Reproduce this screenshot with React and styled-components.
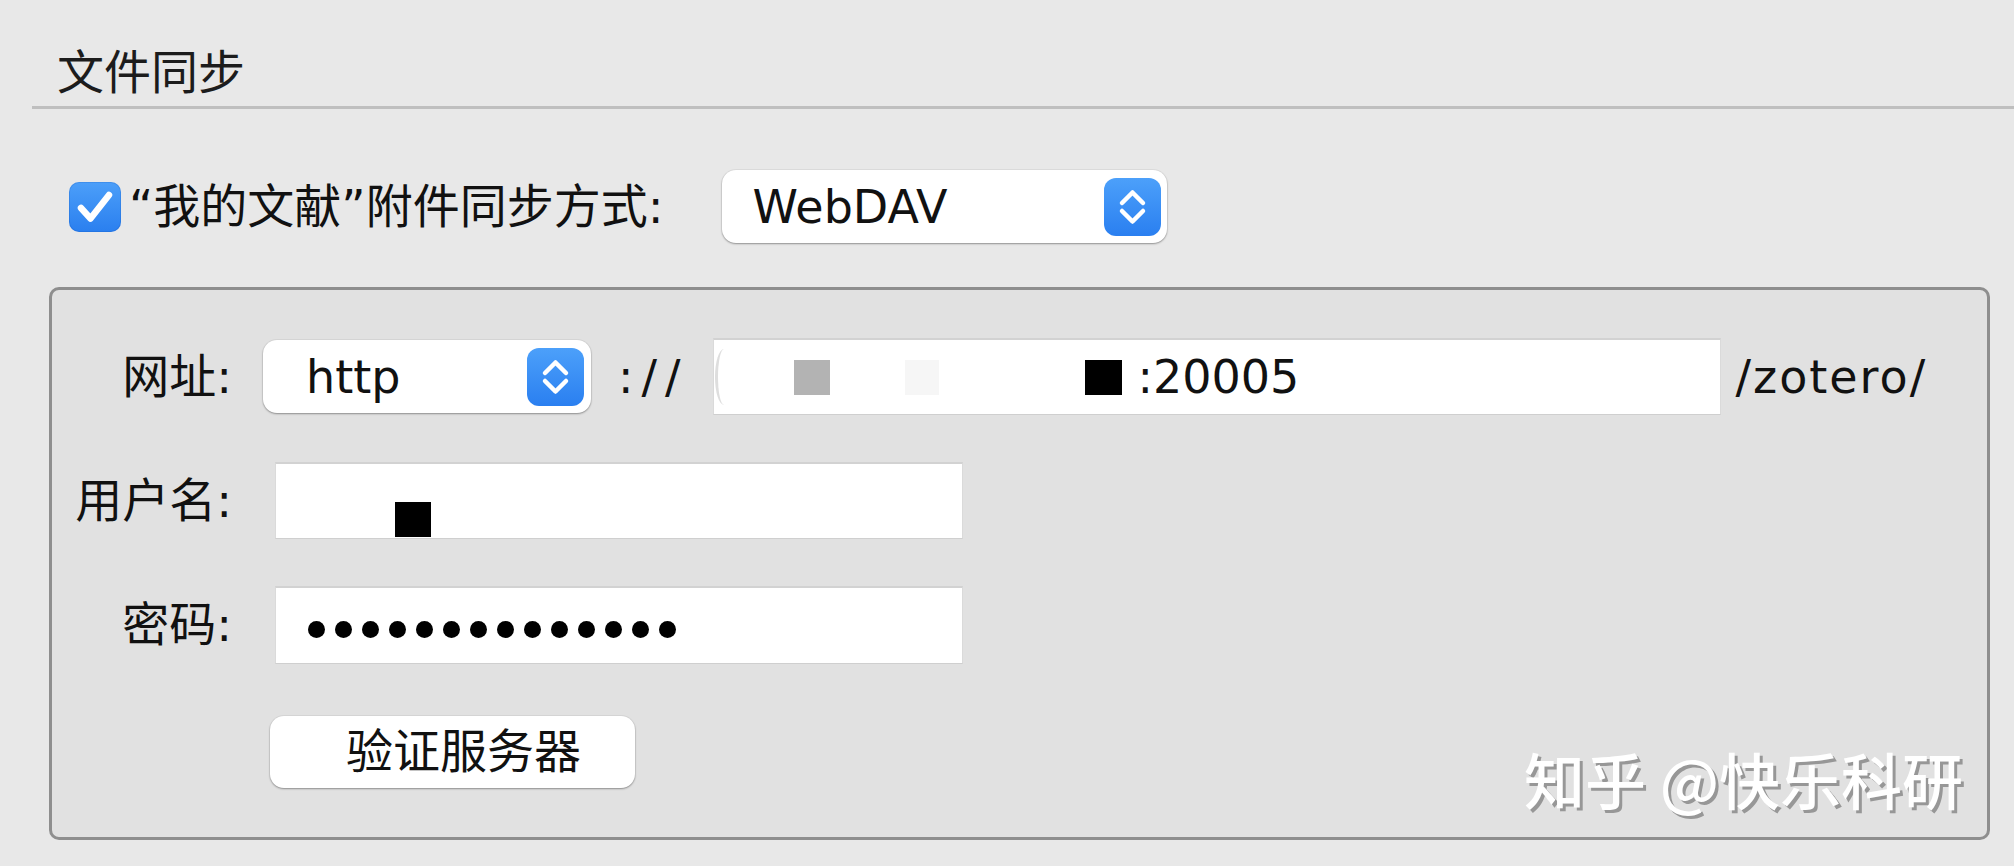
import React from 'react'
import styled, { createGlobalStyle } from 'styled-components'

const GlobalStyle = createGlobalStyle`
  html, body {
    margin: 0;
    padding: 0;
    background: #e8e8e8;
  }
`

const UI_FONT = `"DejaVu Sans", "Noto Sans CJK SC", sans-serif`

const Window = styled.div`
  width: 2014px;
  height: 866px;
  overflow: hidden;
  display: flex;
  flex-direction: column;
  background: #e8e8e8;
  color: #111;
  font-family: ${UI_FONT};
  font-size: 47px;
`

const SectionTitle = styled.h2`
  margin: 43px 0 0 57px;
  font-size: 47px;
  font-weight: 400;
  line-height: 60px;
  color: #1c1c1c;
`

const Rule = styled.div`
  margin: 3px 0 0 32px;
  height: 3px;
  background: #bfbfbf;
`

const SyncRow = styled.div`
  display: flex;
  align-items: center;
  height: 73px;
  margin: 61px 0 0 69px;
`

const CheckBox = styled.span`
  display: flex;
  align-items: center;
  justify-content: center;
  width: 52px;
  height: 50px;
  border-radius: 10px;
  background: linear-gradient(#4c9ff9, #2a7fef);
  box-shadow: inset 0 0 0 1px rgba(0, 60, 160, 0.15);
`

const SyncLabel = styled.span`
  margin-left: 8px;
  line-height: 60px;
  white-space: nowrap;
`

const Popup = styled.div`
  display: flex;
  align-items: center;
  box-sizing: border-box;
  width: ${p => p.$w}px;
  height: 73px;
  margin-left: ${p => p.$ml}px;
  padding: 0 ${p => p.$pr}px 0 ${p => p.$pl}px;
  background: #fff;
  border-radius: 14px;
  box-shadow: 0 1px 2px rgba(0, 0, 0, 0.35), 0 0 0 1px rgba(0, 0, 0, 0.04);
`

const PopupText = styled.span`
  flex: 1;
  font-size: 46px;
  line-height: 60px;
`

const Stepper = styled.span`
  display: flex;
  align-items: center;
  justify-content: center;
  width: 57px;
  height: 58px;
  border-radius: 12px;
  background: linear-gradient(#4ca0fa, #2a7ff0);
`

const Panel = styled.div`
  position: relative;
  box-sizing: border-box;
  width: 1941px;
  height: 553px;
  margin: 44px 0 0 49px;
  padding-top: 48px;
  display: flex;
  flex-direction: column;
  gap: 47px;
  background: #e1e1e1;
  border: 3px solid #8e8e8e;
  border-radius: 10px;
`

const FormRow = styled.div`
  display: flex;
  align-items: center;
  height: ${p => p.$h}px;
  margin-top: ${p => p.$mt || 0}px;
`

const FieldLabel = styled.span`
  flex-shrink: 0;
  width: 180px;
  text-align: right;
  line-height: 60px;
  white-space: nowrap;
`

const Plain = styled.span`
  margin-left: ${p => p.$ml}px;
  font-size: 46px;
  line-height: 60px;
  letter-spacing: ${p => p.$ls || 0}px;
  white-space: nowrap;
`

const Field = styled.div`
  display: flex;
  align-items: center;
  box-sizing: border-box;
  width: ${p => p.$w}px;
  height: ${p => p.$h}px;
  margin-left: ${p => p.$ml}px;
  background: #fff;
  border: 1px solid #dadada;
  border-top: 2px solid #d2d2d2;
  border-bottom-color: #cfcfcf;
`

const Blot = styled.span`
  flex-shrink: 0;
  width: ${p => p.$w}px;
  height: ${p => p.$h}px;
  margin-left: ${p => p.$ml}px;
  background: ${p => p.$c};
  align-self: ${p => (p.$bottom ? 'flex-end' : 'center')};
  margin-bottom: ${p => (p.$bottom ? 1 : 0)}px;
`

const Arc = styled.span`
  flex-shrink: 0;
  width: 18px;
  height: 56px;
  margin-left: 1px;
  box-sizing: border-box;
  border-left: 3px solid #dedede;
  border-radius: 50%;
`

const FieldText = styled.span`
  margin-left: ${p => p.$ml}px;
  font-size: 46px;
  line-height: 60px;
`

const Dots = styled.span`
  display: flex;
  gap: 10px;
  margin: 8px 0 0 32px;
`

const Dot = styled.span`
  width: 17px;
  height: 17px;
  border-radius: 50%;
  background: #000;
`

const PushButton = styled.button`
  box-sizing: border-box;
  width: 365px;
  height: 72px;
  margin-left: ${p => p.$ml}px;
  padding: 0 0 0 22px;
  border: none;
  border-radius: 14px;
  background: #fff;
  box-shadow: 0 1px 2px rgba(0, 0, 0, 0.35), 0 0 0 1px rgba(0, 0, 0, 0.04);
  font-family: ${UI_FONT};
  font-size: 47px;
  line-height: 60px;
  color: #111;
`

const Watermark = styled.span`
  position: absolute;
  right: 24px;
  bottom: 28px;
  font-family: "Noto Sans CJK SC", sans-serif;
  font-size: 61px;
  font-weight: 500;
  line-height: 1;
  color: #fff;
  white-space: nowrap;
  text-shadow: 3px 3px 0 #979797;
`

const CheckMark = () => (
  <svg width="52" height="50" viewBox="0 0 52 50">
    <path d="M12 26 L21.5 36.5 L40 13" fill="none" stroke="#fff" strokeWidth="6.5" strokeLinecap="round" strokeLinejoin="round" />
  </svg>
)

const Chevrons = () => (
  <svg width="57" height="58" viewBox="0 0 57 58">
    <g fill="none" stroke="#fff" strokeWidth="4.5" strokeLinecap="round" strokeLinejoin="round">
      <path d="M18 25 L28.5 14.5 L39 25" />
      <path d="M18 33 L28.5 43.5 L39 33" />
    </g>
  </svg>
)

const Select = ({ value, ...rest }) => (
  <Popup {...rest}>
    <PopupText>{value}</PopupText>
    <Stepper><Chevrons /></Stepper>
  </Popup>
)

export default function App() {
  return (
    <Window>
      <GlobalStyle />
      <SectionTitle>文件同步</SectionTitle>
      <Rule />

      <SyncRow>
        <CheckBox><CheckMark /></CheckBox>
        <SyncLabel>“我的文献”附件同步方式:</SyncLabel>
        <Select value="WebDAV" $w={445} $ml={58} $pl={31} $pr={6} />
      </SyncRow>

      <Panel>
        <FormRow $h={77}>
          <FieldLabel>网址:</FieldLabel>
          <Select value="http" $w={328} $ml={31} $pl={43} $pr={7} />
          <Plain $ml={27} $ls={8}>://</Plain>
          <Field $w={1008} $h={77} $ml={24}>
            <Arc />
            <Blot $w={36} $h={35} $ml={61} $c="#b3b3b3" />
            <Blot $w={34} $h={35} $ml={75} $c="#f6f6f6" />
            <Blot $w={37} $h={35} $ml={146} $c="#000" />
            <FieldText $ml={16}>:20005</FieldText>
          </Field>
          <Plain $ml={15} $ls={2}>/zotero/</Plain>
        </FormRow>

        <FormRow $h={77}>
          <FieldLabel>用户名:</FieldLabel>
          <Field $w={688} $h={77} $ml={43}>
            <Blot $w={36} $h={35} $ml={119} $c="#000" $bottom />
          </Field>
        </FormRow>

        <FormRow $h={78}>
          <FieldLabel>密码:</FieldLabel>
          <Field $w={688} $h={78} $ml={43}>
            <Dots>
              {Array.from({ length: 14 }, (_, i) => <Dot key={i} />)}
            </Dots>
          </Field>
        </FormRow>

        <FormRow $h={72} $mt={5}>
          <FieldLabel />
          <PushButton $ml={38}>验证服务器</PushButton>
        </FormRow>

        <Watermark>知乎 @快乐科研</Watermark>
      </Panel>
    </Window>
  )
}
